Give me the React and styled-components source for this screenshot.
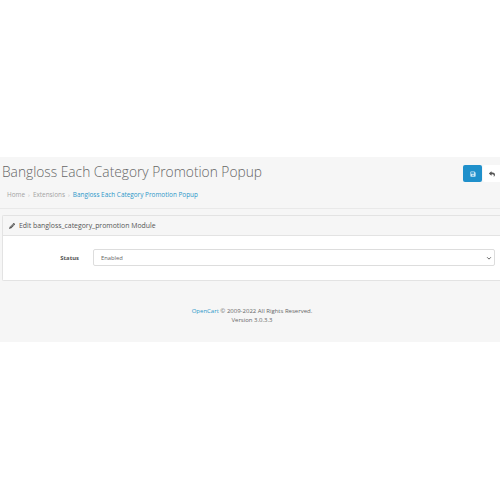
import React from 'react'
import styled, { createGlobalStyle } from 'styled-components'
import { FaPencilAlt, FaSave, FaReply } from 'react-icons/fa'

const GlobalStyle = createGlobalStyle`
  html, body {
    margin: 0;
    padding: 0;
    background: #fff;
    overflow: hidden;
  }
  body {
    font-family: "Open Sans", "Liberation Sans", sans-serif;
  }
`

const Page = styled.div`
  width: 500px;
  height: 500px;
  padding-top: 157px;
  box-sizing: border-box;
  overflow: hidden;
`

const Content = styled.div`
  height: 185px;
  background: #f6f6f6;
`

const Header = styled.div`
  height: 51px;
  border-bottom: 1px solid #e9e9e9;
  margin-bottom: 6px;
  padding-left: 2px;
  display: flex;
  justify-content: space-between;
  overflow: hidden;
`

const TitleBlock = styled.div`
  display: flex;
  flex-direction: column;
`

const Title = styled.h1`
  margin: 4px 0 0;
  font-size: 13.75px;
  line-height: 22px;
  font-weight: 300;
  color: #666;
  white-space: nowrap;
`

const Breadcrumb = styled.div`
  display: flex;
  align-items: center;
  margin-top: 7px;
  padding-left: 5px;
  font-size: 6.4px;
  line-height: 10px;
`

const Crumb = styled.span`
  color: ${props => (props.$active ? '#2b97c9' : '#a3a3a3')};
`

const Sep = styled.span`
  margin: 0 3px;
  color: #bbb;
  font-size: 6px;
`

const Actions = styled.div`
  display: flex;
  gap: 1px;
  margin-top: 8px;
`

const ActionButton = styled.div`
  width: ${props => (props.$primary ? '19px' : '17px')};
  height: 17px;
  border-radius: ${props => (props.$primary ? '2px' : '2px 0 0 2px')};
  background: ${props => (props.$primary ? '#1f90cb' : '#fff')};
  color: ${props => (props.$primary ? '#cfe8f5' : '#555')};
  font-size: 6px;
  display: flex;
  align-items: center;
  justify-content: center;
`

const Panel = styled.div`
  margin: 0 0 0 2px;
  border: 1px solid #e3e3e3;
  border-right: none;
  border-radius: 2px 0 0 2px;
`

const PanelHeading = styled.div`
  height: 19px;
  background: #f6f6f6;
  border-bottom: 1px solid #e3e3e3;
  display: flex;
  align-items: center;
  gap: 4px;
  padding-left: 6px;
  font-size: 6.9px;
  color: #555;
`

const PanelBody = styled.div`
  height: 44px;
  background: #fff;
  display: flex;
  align-items: center;
  padding-bottom: 1px;
  box-sizing: border-box;
`

const FieldLabel = styled.label`
  width: 76px;
  text-align: right;
  font-size: 5.9px;
  font-weight: 700;
  color: #555;
`

const SelectBox = styled.div`
  margin-left: 14px;
  width: 402px;
  height: 17px;
  border: 1px solid #ddd;
  border-radius: 2px;
  box-sizing: border-box;
  display: flex;
  align-items: center;
  justify-content: space-between;
  padding: 0 2px 0 7px;
  font-size: 5.8px;
  color: #666;
  background: #fff;
`

const Footer = styled.footer`
  margin-top: 26px;
  padding-left: 4px;
  text-align: center;
  font-size: 6px;
  line-height: 9px;
  color: #666;
`

const FooterLink = styled.span`
  color: #2b97c9;
`

const App = () => (
  <Page>
    <GlobalStyle />
    <Content>
      <Header>
        <TitleBlock>
          <Title>Bangloss Each Category Promotion Popup</Title>
          <Breadcrumb>
            <Crumb>Home</Crumb>
            <Sep>›</Sep>
            <Crumb>Extensions</Crumb>
            <Sep>›</Sep>
            <Crumb $active>Bangloss Each Category Promotion Popup</Crumb>
          </Breadcrumb>
        </TitleBlock>
        <Actions>
          <ActionButton $primary><FaSave /></ActionButton>
          <ActionButton><FaReply /></ActionButton>
        </Actions>
      </Header>
      <Panel>
        <PanelHeading>
          <FaPencilAlt size={6} />
          Edit bangloss_category_promotion Module
        </PanelHeading>
        <PanelBody>
          <FieldLabel>Status</FieldLabel>
          <SelectBox>
            Enabled
            <svg width="6" height="6" viewBox="0 0 8 8">
              <path d="M1.5 3 L4 5.5 L6.5 3" fill="none" stroke="#555" strokeWidth="1.2" />
            </svg>
          </SelectBox>
        </PanelBody>
      </Panel>
      <Footer>
        <FooterLink>OpenCart</FooterLink> © 2009-2022 All Rights Reserved.
        <br />
        Version 3.0.3.3
      </Footer>
    </Content>
  </Page>
)

export default App
